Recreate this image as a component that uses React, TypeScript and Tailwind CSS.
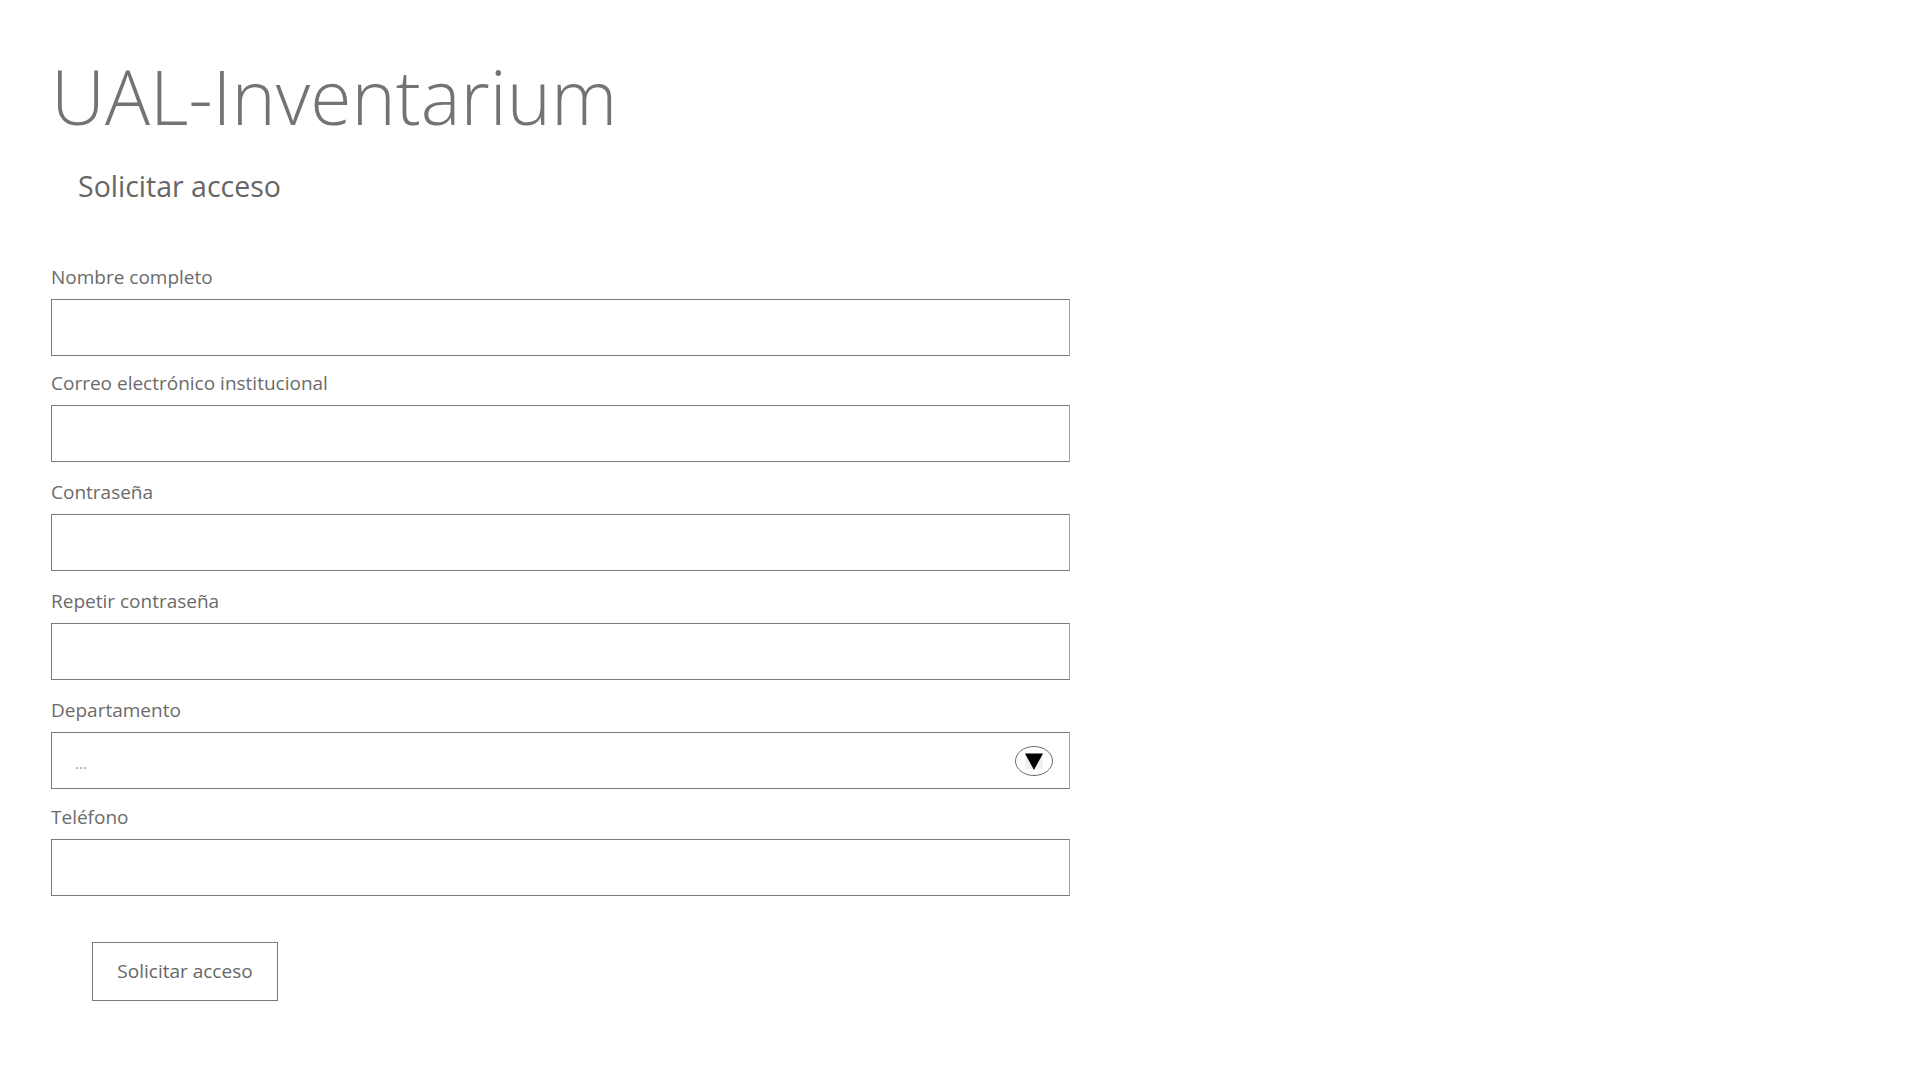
import React from 'react';

const font = { fontFamily: '"Open Sans", "Noto Sans", sans-serif' };

function Field({ label, top, children }: { label: string; top: string; children?: React.ReactNode }) {
  return (
    <div className={top}>
      <div className="h-[24px] text-[19px] leading-[26px] text-[#6b6b6b]">{label}</div>
      <div className="mt-[11px] h-[57px] w-[1019px] border border-[#7a7a7a] border-r-[#a3a3a3] bg-white">
        {children}
      </div>
    </div>
  );
}

function DropArrow() {
  return (
    <svg width="40" height="32" viewBox="0 0 40 32">
      <ellipse cx="20" cy="16" rx="18.5" ry="14.5" fill="#fff" stroke="#6a6a6a" strokeWidth="1" />
      <rect x="11" y="9" width="18" height="15" fill="#f0f0f0" />
      <polygon points="11,8.5 29,8.5 20,25" fill="#000" />
    </svg>
  );
}

export default function App() {
  return (
    <div className="min-h-screen w-full bg-white pl-[51px] pt-[59px]" style={font}>
      <h1 className="text-[75px] font-light leading-[75px] text-[#737373]">UAL-Inventarium</h1>
      <h2 className="ml-[27px] mt-[38px] text-[28.5px] leading-[28px] text-[#666666]">Solicitar acceso</h2>

      <form className="mt-[64px]" onSubmit={(e) => e.preventDefault()}>
        <Field label="Nombre completo" top="" />
        <Field label="Correo electrónico institucional" top="mt-[14px]" />
        <Field label="Contraseña" top="mt-[17px]" />
        <Field label="Repetir contraseña" top="mt-[17px]" />
        <Field label="Departamento" top="mt-[17px]">
          <div className="flex h-full items-center justify-between pl-[23px] pr-[15px]">
            <span className="pt-[6px] text-[15px] leading-none text-[#9a9a9a]">...</span>
            <DropArrow />
          </div>
        </Field>
        <Field label="Teléfono" top="mt-[15px]" />

        <button
          type="submit"
          className="ml-[41px] mt-[46px] flex h-[59px] w-[186px] items-center justify-center border border-[#7a7a7a] bg-white text-[19px] text-[#666666]"
        >
          Solicitar acceso
        </button>
      </form>
    </div>
  );
}
